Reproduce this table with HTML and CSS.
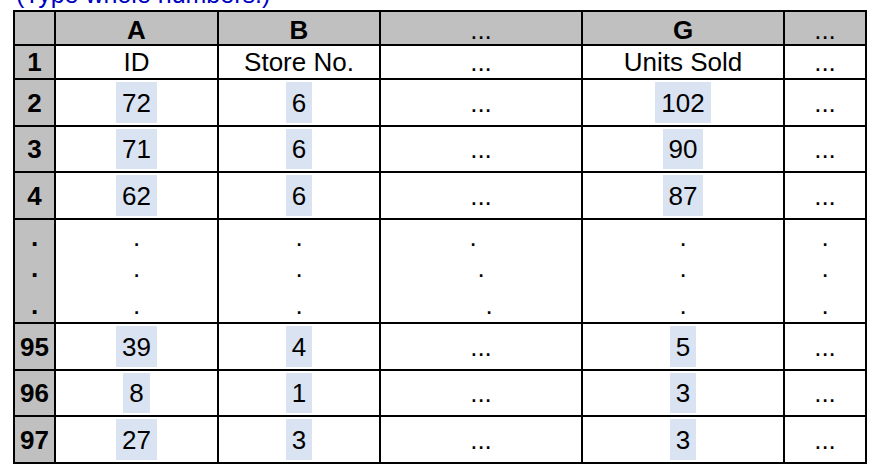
FILE: index.html
```html
<!DOCTYPE html>
<html>
<head>
<meta charset="utf-8">
<link rel="stylesheet" href="styles.css">
</head>
<body>
<div class="note">(Type whole numbers.)</div>
<div class="sheet">
  <div class="cell hd"></div>
  <div class="cell hd bold">A</div>
  <div class="cell hd bold">B</div>
  <div class="cell hd">...</div>
  <div class="cell hd bold">G</div>
  <div class="cell hd">...</div>

  <div class="cell rn">1</div>
  <div class="cell">ID</div>
  <div class="cell">Store No.</div>
  <div class="cell">...</div>
  <div class="cell">Units Sold</div>
  <div class="cell">...</div>

  <div class="cell rn">2</div>
  <div class="cell"><span class="hl">72</span></div>
  <div class="cell"><span class="hl">6</span></div>
  <div class="cell">...</div>
  <div class="cell"><span class="hl">102</span></div>
  <div class="cell">...</div>

  <div class="cell rn">3</div>
  <div class="cell"><span class="hl">71</span></div>
  <div class="cell"><span class="hl">6</span></div>
  <div class="cell">...</div>
  <div class="cell"><span class="hl">90</span></div>
  <div class="cell">...</div>

  <div class="cell rn">4</div>
  <div class="cell"><span class="hl">62</span></div>
  <div class="cell"><span class="hl">6</span></div>
  <div class="cell">...</div>
  <div class="cell"><span class="hl">87</span></div>
  <div class="cell">...</div>

  <div class="cell rn dots"><span>.</span><span>.</span><span>.</span></div>
  <div class="cell dots"><span>.</span><span>.</span><span>.</span></div>
  <div class="cell dots"><span>.</span><span>.</span><span>.</span></div>
  <div class="cell dots diag"><span>.</span><span>.</span><span>.</span></div>
  <div class="cell dots"><span>.</span><span>.</span><span>.</span></div>
  <div class="cell dots"><span>.</span><span>.</span><span>.</span></div>

  <div class="cell rn">95</div>
  <div class="cell"><span class="hl">39</span></div>
  <div class="cell"><span class="hl">4</span></div>
  <div class="cell">...</div>
  <div class="cell"><span class="hl">5</span></div>
  <div class="cell">...</div>

  <div class="cell rn">96</div>
  <div class="cell"><span class="hl">8</span></div>
  <div class="cell"><span class="hl">1</span></div>
  <div class="cell">...</div>
  <div class="cell"><span class="hl">3</span></div>
  <div class="cell">...</div>

  <div class="cell rn">97</div>
  <div class="cell"><span class="hl">27</span></div>
  <div class="cell"><span class="hl">3</span></div>
  <div class="cell">...</div>
  <div class="cell"><span class="hl">3</span></div>
  <div class="cell">...</div>
</div>
</body>
</html>
```

FILE: styles.css
```css
html, body {
  margin: 0;
  padding: 0;
  background: #ffffff;
}

body {
  font-family: "Liberation Sans", Arial, sans-serif;
  font-size: 26px;
  color: #000000;
  overflow: hidden;
}

.note {
  color: #0000c0;
  font-size: 25px;
  line-height: 25px;
  height: 28px;
  margin-top: -18px;
  padding-left: 16px;
  white-space: nowrap;
}

.sheet {
  display: grid;
  grid-template-columns: 39px 161px 160px 200px 200px 80px;
  grid-template-rows: 32px 32px 45px 44px 45px 102px 45px 44px 45px;
  gap: 2px;
  padding: 2px;
  background: #000000;
  width: max-content;
  margin-left: 13px;
}

.cell {
  background: #ffffff;
  display: flex;
  align-items: center;
  justify-content: center;
  line-height: 26px;
  white-space: nowrap;
}

.hd {
  background: #c0c0c0;
  padding-top: 3px;
}

.bold {
  font-weight: bold;
}

.rn {
  background: #c0c0c0;
  font-weight: bold;
}

.hl {
  background: #dae3f1;
  align-self: stretch;
  margin: 2px 0;
  padding: 0 6px;
  display: flex;
  align-items: center;
}

.dots {
  flex-direction: column;
  justify-content: flex-start;
  padding-top: 5px;
}

.dots span {
  display: block;
  height: 25px;
  line-height: 25px;
}

.dots span:nth-child(2) {
  margin-top: 6px;
}

.dots span:nth-child(3) {
  margin-top: 12px;
}

.diag span:nth-child(1) {
  margin-left: -16px;
}

.diag span:nth-child(3) {
  margin-left: 16px;
}
```
